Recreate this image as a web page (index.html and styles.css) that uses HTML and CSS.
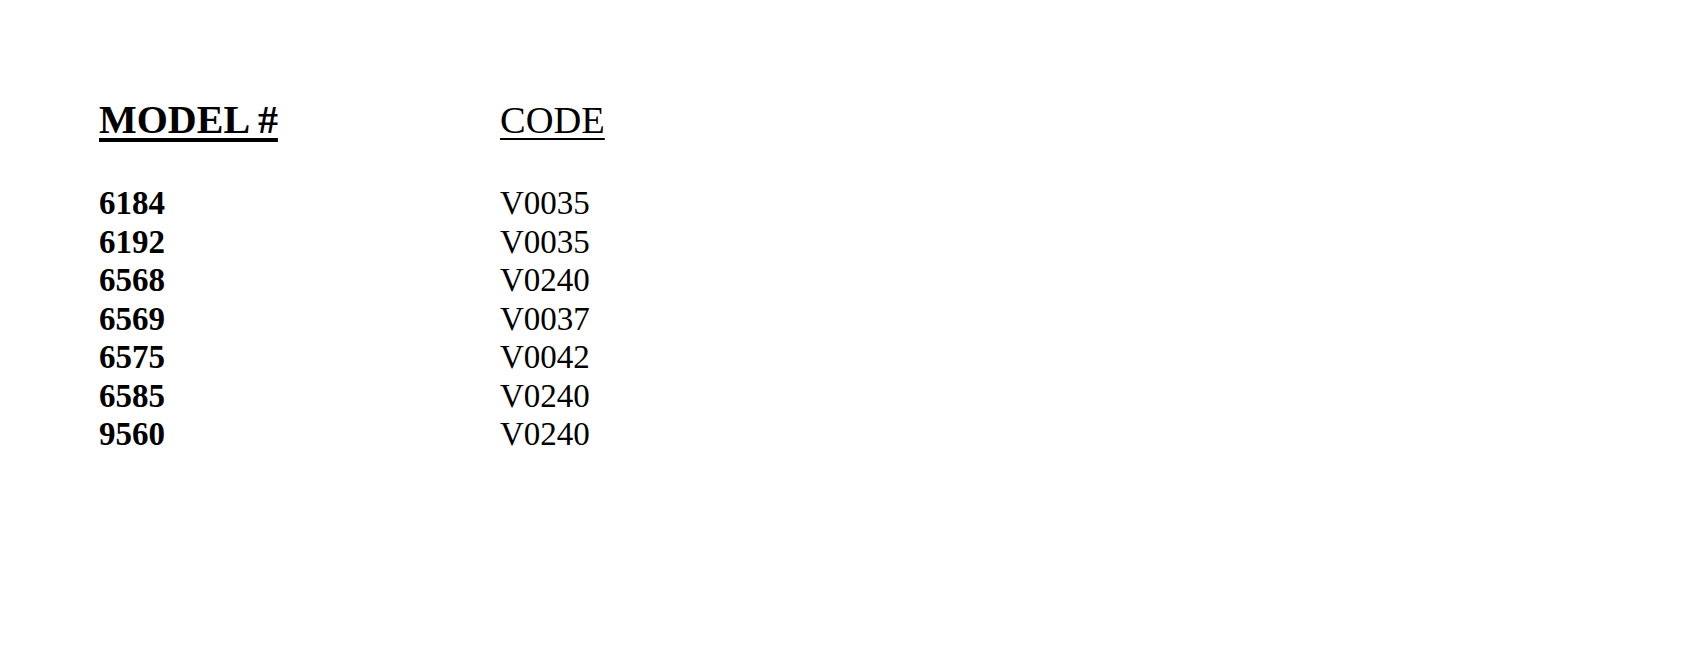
FILE: index.html
```html
<!DOCTYPE html>
<html lang="en">
<head>
<meta charset="utf-8">
<title>Model codes</title>
<link rel="stylesheet" href="styles.css">
</head>
<body>
<div class="sheet">
  <div class="head-row">
    <div class="h-model">MODEL #</div>
    <div class="h-code">CODE</div>
  </div>
  <div class="rows">
    <div class="model">6184</div><div class="code">V0035</div>
    <div class="model">6192</div><div class="code">V0035</div>
    <div class="model">6568</div><div class="code">V0240</div>
    <div class="model">6569</div><div class="code">V0037</div>
    <div class="model">6575</div><div class="code">V0042</div>
    <div class="model">6585</div><div class="code">V0240</div>
    <div class="model">9560</div><div class="code">V0240</div>
  </div>
</div>
</body>
</html>
```
FILE: styles.css
```css
html, body {
  margin: 0;
  padding: 0;
  background: #fff;
}
body {
  width: 1699px;
  height: 671px;
  overflow: hidden;
  font-family: "Liberation Serif", "Times New Roman", serif;
  color: #000;
}
.sheet {
  padding: 98px 0 0 99px;
}
.head-row {
  display: grid;
  grid-template-columns: 401px auto;
  font-size: 40px;
  line-height: 44px;
  height: 86px;
}
.h-model, .h-code {
  text-decoration: underline;
  text-underline-offset: 5px;
  justify-self: start;
}
.h-model {
  font-weight: bold;
  text-decoration-thickness: 4px;
}
.h-code {
  font-weight: normal;
  font-size: 38.5px;
  text-decoration-thickness: 2px;
}
.rows {
  display: grid;
  grid-template-columns: 401px auto;
  font-size: 33px;
  line-height: 38.5px;
}
.model {
  font-weight: bold;
}
.code {
  font-weight: normal;
}
```
